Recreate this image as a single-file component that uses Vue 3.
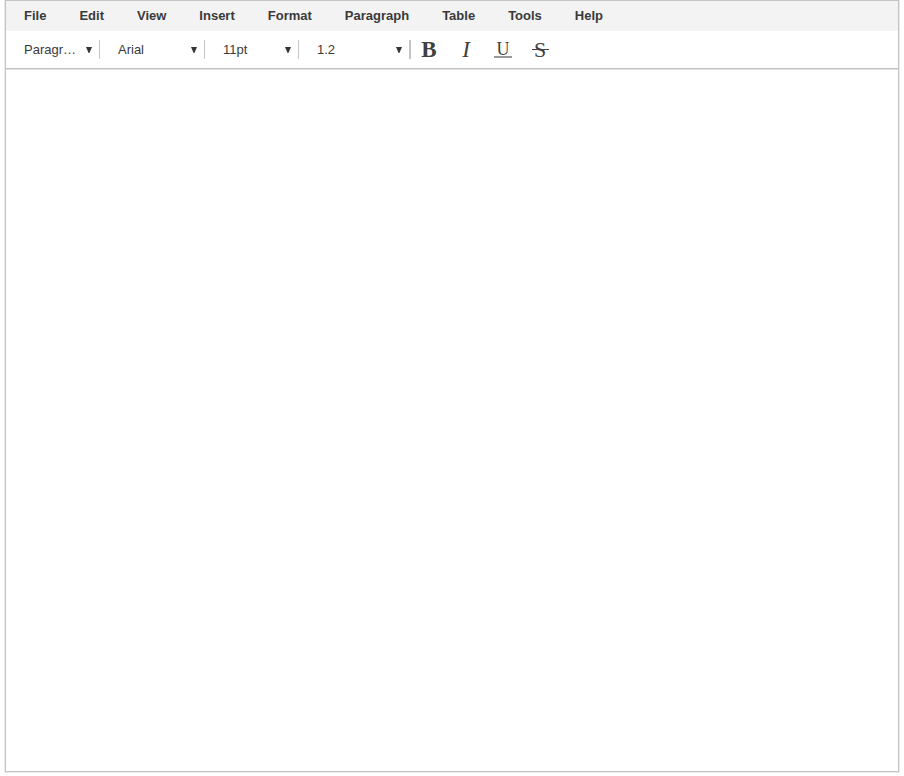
<script setup>
import { ref, reactive } from 'vue';

const menus = ['File', 'Edit', 'View', 'Insert', 'Format', 'Paragraph', 'Table', 'Tools', 'Help'];

const selects = reactive([
  { name: 'block', label: 'Block format', value: 'Paragraph', options: ['Paragraph', 'Heading 1', 'Heading 2'] },
  { name: 'font', label: 'Font family', value: 'Arial', options: ['Arial', 'Georgia', 'Verdana'] },
  { name: 'size', label: 'Font size', value: '11pt', options: ['10pt', '11pt', '12pt', '14pt'] },
  { name: 'line', label: 'Line height', value: '1.2', options: ['1', '1.2', '1.5', '2'] }
]);

const formats = [
  { name: 'bold', letter: 'B' },
  { name: 'italic', letter: 'I' },
  { name: 'underline', letter: 'U' },
  { name: 'strikethrough', letter: 'S' }
];

const content = ref(null);
const applyFormat = (name) => {
  content.value.focus();
  document.execCommand(name);
};
</script>

<template>
  <main class="editor">
    <nav class="editor__menu">
      <button class="editor__menu-item" type="button" v-for="menu of menus" :key="menu">{{ menu }}</button>
    </nav>
    <div class="editor__toolbar">
      <div class="picker" :class="`picker_${item.name}`" v-for="item of selects" :key="item.name">
        <select class="picker__select" v-model="item.value" :aria-label="item.label">
          <option v-for="option of item.options" :key="option">{{ option }}</option>
        </select>
        <svg class="picker__arrow" width="6" height="6" viewBox="0 0 6 6">
          <path d="M0 0H6L3.4 6H2.6Z" />
        </svg>
      </div>
      <div class="formats">
        <button
          class="formats__button"
          type="button"
          v-for="format of formats"
          :key="format.name"
          :aria-label="format.name"
          @click="applyFormat(format.name)"
        >
          <span class="formats__letter" :class="`formats__letter_${format.name}`">{{ format.letter }}</span>
        </button>
      </div>
    </div>
    <div class="editor__content" ref="content" contenteditable="true" role="textbox" aria-label="Document"></div>
  </main>
</template>

<style>
body {
  background-color: #fff;
}
</style>

<style scoped>
.editor {
  display: flex;
  flex-direction: column;
  box-sizing: border-box;
  min-height: calc(100vh - 4px);
  margin: 0 5px 4px;
  border: 1px solid #c4c4c4;
  box-shadow: 0 0 0 1px #ebebeb;
  color: #3a3a3a;
  font-family: Arial, 'Liberation Sans', sans-serif;
  font-size: 13px;
}

.editor__menu {
  display: flex;
  gap: 33px;
  height: 30px;
  padding: 0 18px;
  background-color: #f3f3f3;
}

.editor__menu-item {
  padding: 0 0 2px;
  border: none;
  background: none;
  color: inherit;
  font: inherit;
  font-weight: bold;
}

.editor__toolbar {
  display: flex;
  align-items: center;
  height: 37px;
  border-bottom: 1px solid #c4c4c4;
  box-shadow: 0 1px 0 #e0e0e0;
}

.editor__content {
  flex-grow: 1;
  margin-top: 1px;
  padding: 16px;
  outline: none;
}

.picker {
  display: grid;
  align-items: center;
  box-sizing: border-box;
  height: 19px;
  border-right: 1px solid #c4c4c4;
}

.picker_block,
.picker_size {
  width: 94px;
}

.picker_font {
  width: 105px;
}

.picker_line {
  width: 112px;
  border-right-width: 2px;
}

.picker__select {
  grid-area: 1 / 1;
  width: 100%;
  min-width: 0;
  padding: 0 22px 0 18px;
  border: none;
  background: none;
  color: inherit;
  font: inherit;
  text-overflow: ellipsis;
  appearance: none;
}

.picker__arrow {
  grid-area: 1 / 1;
  justify-self: end;
  margin-right: 7px;
  fill: #333;
  pointer-events: none;
}

.formats {
  display: flex;
  gap: 1px;
}

.formats__button {
  display: flex;
  align-items: center;
  justify-content: center;
  width: 36px;
  height: 36px;
  padding: 0;
  border: none;
  background: none;
  color: #404040;
  font-family: 'Liberation Serif', serif;
  font-size: 23px;
}

.formats__letter {
  line-height: 24px;
}

.formats__letter_bold {
  font-weight: bold;
}

.formats__letter_italic {
  font-style: italic;
}

.formats__letter_underline {
  width: 18px;
  border-bottom: 2px solid #999;
  font-size: 18px;
  line-height: 14px;
}

.formats__letter_strikethrough {
  width: 17px;
  background: linear-gradient(#404040, #404040) center / 100% 1px no-repeat;
  font-size: 22px;
}
</style>
